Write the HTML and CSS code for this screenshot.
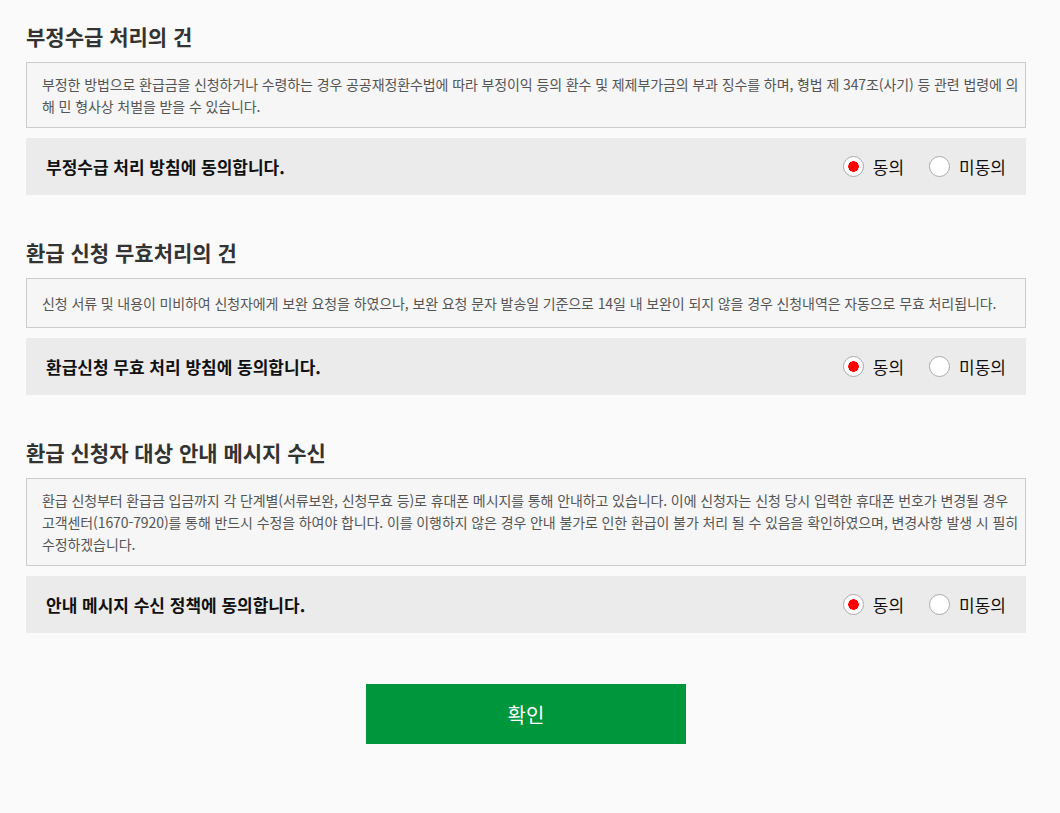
FILE: index.html
```html
<!DOCTYPE html>
<html lang="ko">
  <head>
    <meta charset="UTF-8" />
    <meta name="viewport" content="width=device-width, initial-scale=1.0" />
    <title>약관 동의</title>
    <link rel="stylesheet" href="styles.css">
  </head>
  <body>
    <div class="container">
      <!-- 부정수급 -->
      <div class="section">
        <h2 class="title">부정수급 처리의 건</h2>
        <div class="desc">
          부정한 방법으로 환급금을 신청하거나 수령하는 경우 공공재정환수법에 따라 부정이익 등의 환수 및 제제부가금의 부과 징수를 하며, 형법 제 347조(사기) 등 관련 법령에 의해 민 형사상 처벌을 받을 수 있습니다.
        </div>
        <div class="agree">
          <span class="agreeText">부정수급 처리 방침에 동의합니다.</span>
          <div class="choice">
            <label><input type="radio" name="agree1" value="Y" checked /> 동의</label>
            <label><input type="radio" name="agree1" value="N" /> 미동의</label>
          </div>
        </div>
      </div>

      <!-- 무효처리 -->
      <div class="section">
        <h2 class="title">환급 신청 무효처리의 건</h2>
        <div class="desc single">
          신청 서류 및 내용이 미비하여 신청자에게 보완 요청을 하였으나, 보완 요청 문자 발송일 기준으로 14일 내 보완이 되지 않을 경우 신청내역은 자동으로 무효 처리됩니다.
        </div>
        <div class="agree">
          <span class="agreeText">환급신청 무효 처리 방침에 동의합니다.</span>
          <div class="choice">
            <label><input type="radio" name="agree2" value="Y" checked /> 동의</label>
            <label><input type="radio" name="agree2" value="N" /> 미동의</label>
          </div>
        </div>
      </div>

      <!-- 메시지 수신 -->
      <div class="section">
        <h2 class="title">환급 신청자 대상 안내 메시지 수신</h2>
        <div class="desc">
          환급 신청부터 환급금 입금까지 각 단계별(서류보완, 신청무효 등)로 휴대폰 메시지를 통해 안내하고 있습니다. 이에 신청자는 신청 당시 입력한 휴대폰 번호가 변경될 경우 고객센터(1670-7920)를 통해 반드시 수정을 하여야 합니다. 이를 이행하지 않은 경우 안내 불가로 인한 환급이 불가 처리 될 수 있음을 확인하였으며, 변경사항 발생 시 필히 수정하겠습니다.
        </div>
        <div class="agree">
          <span class="agreeText">안내 메시지 수신 정책에 동의합니다.</span>
          <div class="choice">
            <label><input type="radio" name="agree3" value="Y" checked /> 동의</label>
            <label><input type="radio" name="agree3" value="N" /> 미동의</label>
          </div>
        </div>
      </div>

      <div class="btnArea">
        <button type="button" class="btnOk">확인</button>
      </div>
    </div>
  </body>
</html>
```

FILE: styles.css
```css
body {
  margin: 0;
  background: #fafafa;
  font-family: "Noto Sans CJK KR", "Noto Sans", sans-serif;
  color: #333;
}

.container {
  width: 1000px;
  padding: 21px 0 40px 26px;
}

.section {
  margin-bottom: 42px;
}

.title {
  margin: 0 0 11px;
  font-size: 21px;
  line-height: 30px;
  font-weight: 700;
  color: #333;
}

.desc {
  padding: 10px 4px 10px 15px;
  border: 1px solid #ccc;
  background: #f6f6f6;
  font-size: 14px;
  line-height: 22px;
  letter-spacing: -0.1px;
  color: #555;
}

.desc.single {
  padding-top: 13px;
  padding-bottom: 13px;
}

.agree {
  display: flex;
  align-items: center;
  justify-content: space-between;
  margin-top: 10px;
  height: 57px;
  padding: 0 20px;
  background: #ebebeb;
}

.agreeText {
  font-size: 17px;
  font-weight: 700;
  color: #111;
}

.choice {
  display: flex;
  gap: 25px;
}

.choice label {
  display: flex;
  align-items: center;
  gap: 9px;
  font-size: 17px;
  color: #111;
  cursor: pointer;
}

.choice input[type="radio"] {
  appearance: none;
  margin: 0;
  width: 21px;
  height: 21px;
  border: 1px solid #aaa;
  border-radius: 50%;
  background: #fff;
}

.choice input[type="radio"]:checked {
  background: radial-gradient(circle, #f00 0, #f00 5px, #fff 5.5px);
}

.btnArea {
  margin-top: 51px;
  text-align: center;
}

.btnOk {
  width: 320px;
  height: 60px;
  border: 0;
  background: #00963b;
  color: #fff;
  font-family: inherit;
  font-size: 20px;
  cursor: pointer;
}
```
